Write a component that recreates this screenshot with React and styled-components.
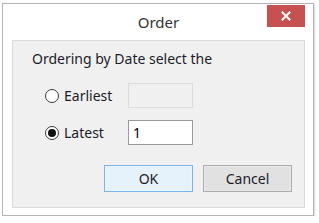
import React from 'react';
import styled, { createGlobalStyle } from 'styled-components';

const GlobalStyle = createGlobalStyle`
  html, body {
    margin: 0;
    padding: 0;
    background: #ffffff;
  }
  body {
    font-family: "Noto Sans", "Open Sans", sans-serif;
  }
`;

const Window = styled.div`
  box-sizing: border-box;
  width: 312px;
  height: 213px;
  margin: 3px 0 0 2px;
  padding: 0 8px 7px 9px;
  background: #ffffff;
  border: 1px solid #b4b4b4;
  box-shadow: 1px 1px 0 #e2e2e2, 2px 2px 0 #f2f2f2;
  display: flex;
  flex-direction: column;
`;

const TitleBar = styled.div`
  height: 36px;
  display: grid;
  grid-template-columns: 1fr auto 1fr;
  align-items: start;
`;

const Title = styled.div`
  grid-column: 2;
  line-height: 36px;
  font-size: 15px;
  color: #333333;
`;

const CloseButton = styled.div`
  grid-column: 3;
  justify-self: end;
  margin-top: 1px;
  width: 38px;
  height: 22px;
  background: #c75050;
  color: #ffffff;
  display: flex;
  align-items: center;
  justify-content: center;
`;

const Client = styled.div`
  flex: 1;
  background: #f0f0f0;
  border: 1px solid #dadada;
  padding: 9px 12px 0 0;
  display: flex;
  flex-direction: column;
`;

const Prompt = styled.div`
  padding-left: 19px;
  font-size: 14px;
  line-height: 18px;
  color: #1c1c2a;
`;

const Options = styled.div`
  display: flex;
  flex-direction: column;
  gap: 12px;
  margin-top: 15px;
  padding-left: 32px;
`;

const OptionRow = styled.label`
  display: flex;
  align-items: center;
  height: 25px;
`;

const Radio = styled.span`
  box-sizing: border-box;
  width: 14px;
  height: 14px;
  border-radius: 50%;
  border: 1px solid #3c3c3c;
  background: #ffffff;
  display: flex;
  align-items: center;
  justify-content: center;
  &::after {
    content: '';
    width: 8px;
    height: 8px;
    border-radius: 50%;
    background: ${p => (p.$checked ? '#111111' : 'transparent')};
  }
`;

const OptionLabel = styled.span`
  width: 64px;
  margin-left: 5px;
  font-size: 14px;
  color: #1c1c2a;
`;

const TextBox = styled.div`
  box-sizing: border-box;
  width: 65px;
  height: 25px;
  padding: 0 4px;
  border: 1px solid ${p => (p.$disabled ? '#dcdcdc' : '#9a9a9a')};
  background: ${p => (p.$disabled ? '#f0f0f0' : '#ffffff')};
  font-size: 14px;
  line-height: 23px;
  color: #000000;
`;

const ButtonRow = styled.div`
  display: flex;
  justify-content: flex-end;
  gap: 10px;
  margin-top: 20px;
`;

const Button = styled.div`
  box-sizing: border-box;
  width: 89px;
  height: 27px;
  display: flex;
  align-items: center;
  justify-content: center;
  font-size: 14px;
  color: #1c1c2a;
  border: 1px solid ${p => (p.$primary ? '#7eb4ea' : '#adadad')};
  background: ${p => (p.$primary ? '#e5f1fb' : '#e1e1e1')};
  box-shadow: inset 0 0 0 1px ${p => (p.$primary ? '#eaf4fd' : '#e8e8e8')};
`;

function CloseIcon() {
  return (
    <svg width="10" height="10" viewBox="0 0 10 10">
      <path d="M1.5 1.5 L8.5 8.5 M8.5 1.5 L1.5 8.5" stroke="#ffffff" strokeWidth="2" strokeLinecap="square" />
    </svg>
  );
}

export default function App() {
  return (
    <>
      <GlobalStyle />
      <Window>
        <TitleBar>
          <Title>Order</Title>
          <CloseButton>
            <CloseIcon />
          </CloseButton>
        </TitleBar>
        <Client>
          <Prompt>Ordering by Date select the</Prompt>
          <Options>
            <OptionRow>
              <Radio />
              <OptionLabel>Earliest</OptionLabel>
              <TextBox $disabled />
            </OptionRow>
            <OptionRow>
              <Radio $checked />
              <OptionLabel>Latest</OptionLabel>
              <TextBox>1</TextBox>
            </OptionRow>
          </Options>
          <ButtonRow>
            <Button $primary>OK</Button>
            <Button>Cancel</Button>
          </ButtonRow>
        </Client>
      </Window>
    </>
  );
}
